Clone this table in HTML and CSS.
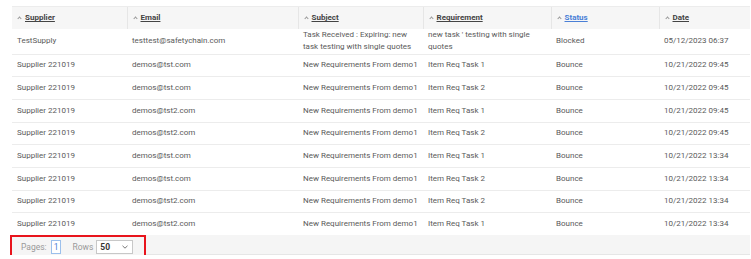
FILE: index.html
```html
<!DOCTYPE html>
<html lang="en">
<head>
    <meta charset="UTF-8">
    <title>Messages</title>
    <link rel="stylesheet" href="styles.css">
</head>
<body>
    <div class="grid">
        <table class="grid-table">
            <colgroup>
                <col style="width: 115px">
                <col style="width: 171px">
                <col style="width: 125px">
                <col style="width: 128px">
                <col style="width: 108px">
                <col>
            </colgroup>
            <thead>
                <tr>
                    <th><span class="caret"></span><a>Supplier</a></th>
                    <th><span class="caret"></span><a>Email</a></th>
                    <th><span class="caret"></span><a>Subject</a></th>
                    <th><span class="caret"></span><a>Requirement</a></th>
                    <th><span class="caret"></span><a class="sorted">Status</a></th>
                    <th><span class="caret"></span><a>Date</a></th>
                </tr>
            </thead>
            <tbody>
                <tr class="tall">
                    <td>TestSupply</td>
                    <td>testtest@safetychain.com</td>
                    <td>Task Received : Expiring: new task testing with single quotes</td>
                    <td>new task ' testing with single quotes</td>
                    <td>Blocked</td>
                    <td>05/12/2023 06:37</td>
                </tr>
                <tr>
                    <td>Supplier 221019</td>
                    <td>demos@tst.com</td>
                    <td>New Requirements From demo1</td>
                    <td>Item Req Task 1</td>
                    <td>Bounce</td>
                    <td>10/21/2022 09:45</td>
                </tr>
                <tr>
                    <td>Supplier 221019</td>
                    <td>demos@tst.com</td>
                    <td>New Requirements From demo1</td>
                    <td>Item Req Task 2</td>
                    <td>Bounce</td>
                    <td>10/21/2022 09:45</td>
                </tr>
                <tr>
                    <td>Supplier 221019</td>
                    <td>demos@tst2.com</td>
                    <td>New Requirements From demo1</td>
                    <td>Item Req Task 1</td>
                    <td>Bounce</td>
                    <td>10/21/2022 09:45</td>
                </tr>
                <tr>
                    <td>Supplier 221019</td>
                    <td>demos@tst2.com</td>
                    <td>New Requirements From demo1</td>
                    <td>Item Req Task 2</td>
                    <td>Bounce</td>
                    <td>10/21/2022 09:45</td>
                </tr>
                <tr>
                    <td>Supplier 221019</td>
                    <td>demos@tst.com</td>
                    <td>New Requirements From demo1</td>
                    <td>Item Req Task 1</td>
                    <td>Bounce</td>
                    <td>10/21/2022 13:34</td>
                </tr>
                <tr>
                    <td>Supplier 221019</td>
                    <td>demos@tst.com</td>
                    <td>New Requirements From demo1</td>
                    <td>Item Req Task 2</td>
                    <td>Bounce</td>
                    <td>10/21/2022 13:34</td>
                </tr>
                <tr>
                    <td>Supplier 221019</td>
                    <td>demos@tst2.com</td>
                    <td>New Requirements From demo1</td>
                    <td>Item Req Task 2</td>
                    <td>Bounce</td>
                    <td>10/21/2022 13:34</td>
                </tr>
                <tr>
                    <td>Supplier 221019</td>
                    <td>demos@tst2.com</td>
                    <td>New Requirements From demo1</td>
                    <td>Item Req Task 1</td>
                    <td>Bounce</td>
                    <td>10/21/2022 13:34</td>
                </tr>
            </tbody>
        </table>

        <div class="pager-bar">
            <div class="pager">
                <span class="pager-label">Pages:</span>
                <span class="page-box">1</span>
                <span class="pager-label rows-label">Rows</span>
                <span class="rows-select">
                    <b>50</b>
                    <svg width="6" height="4" viewBox="0 0 6 4"><path d="M0.5 0.8 L3 3.2 L5.5 0.8" fill="none" stroke="#777" stroke-width="1"/></svg>
                </span>
            </div>
        </div>
    </div>
</body>
</html>
```

FILE: styles.css
```css
* {
    box-sizing: border-box;
}

body {
    margin: 0;
    padding: 6px 1px 0 12px;
    font-family: Roboto, "Liberation Sans", sans-serif;
    font-size: 8px;
    color: #5a5a5a;
    background: #fff;
}

.grid {
    width: 738px;
}

.grid-table {
    width: 100%;
    border-collapse: collapse;
    table-layout: fixed;
}

.grid-table th {
    height: 22px;
    padding: 0 5px;
    text-align: left;
    font-weight: 700;
    color: #444;
    background: #f6f6f6;
    border-top: 1px solid #ececec;
    border-left: 1px solid #e6e6e6;
    white-space: nowrap;
}

.grid-table th:first-child {
    border-left: none;
}

.grid-table th a {
    text-decoration: underline;
}

.grid-table th a.sorted {
    color: #4a7fd6;
}

.caret {
    display: inline-block;
    width: 3px;
    height: 3px;
    margin: 0 4px 0 1px;
    border-left: 1px solid #999;
    border-top: 1px solid #999;
    transform: rotate(45deg);
    vertical-align: 0;
}

.grid-table td {
    height: 22.7px;
    padding: 0 5px;
    line-height: 14px;
    border-bottom: 1px solid #ececec;
    vertical-align: middle;
}

.grid-table tr.tall td {
    height: 25px;
    line-height: 12.5px;
}

.pager-bar {
    height: 20px;
    margin-top: -1px;
    background: #f5f5f5;
    border-bottom: 1px solid #e6e6e6;
}

.pager {
    display: inline-flex;
    align-items: center;
    width: 136px;
    height: 23px;
    margin-left: -2px;
    padding-left: 9px;
    border: 2px solid #e8141c;
    background: #f5f5f5;
    font-size: 8.5px;
}

.pager-label {
    color: #999;
}

.page-box {
    margin-left: 4px;
    padding: 0 2px;
    height: 14px;
    line-height: 12px;
    border: 1px solid #9cc0ec;
    color: #4a7fd6;
    background: #fff;
}

.rows-label {
    margin-left: 11px;
}

.rows-select {
    display: inline-flex;
    align-items: center;
    justify-content: space-between;
    width: 37px;
    height: 14px;
    margin-left: 3px;
    padding: 0 4px 0 3px;
    border: 1px solid #c8c8c8;
    background: #fff;
    color: #333;
}
```
